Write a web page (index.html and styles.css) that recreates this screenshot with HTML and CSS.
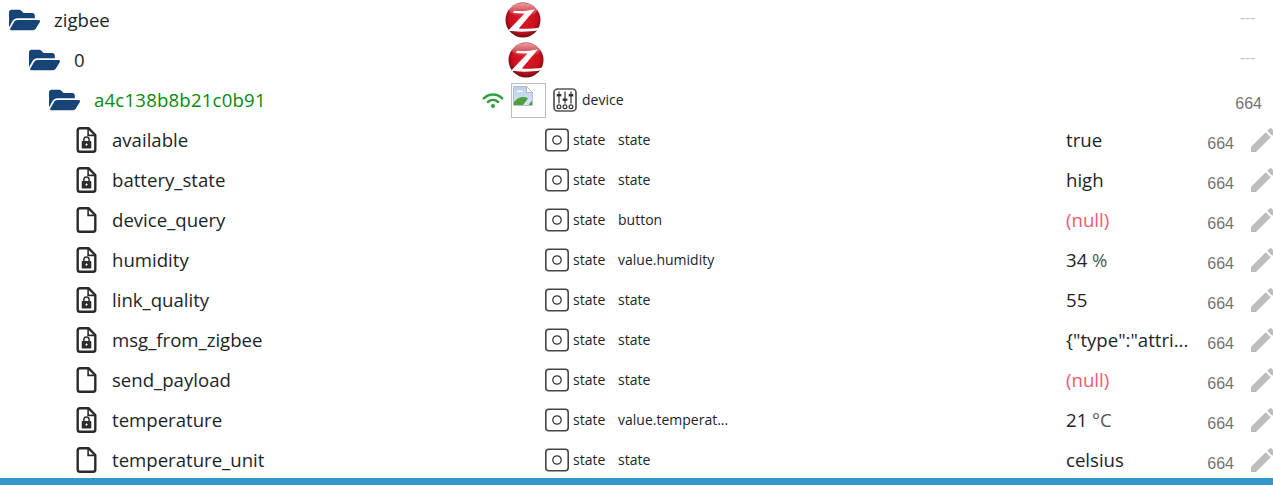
FILE: index.html
```html
<!DOCTYPE html>
<html lang="en">
<head>
<meta charset="utf-8">
<title>Objects</title>
<link rel="stylesheet" href="styles.css">
</head>
<body>
<svg class="defs" width="0" height="0" aria-hidden="true">
  <defs>
    <radialGradient id="zred" cx="50%" cy="45%" r="55%">
      <stop offset="0" stop-color="#e01a28"/>
      <stop offset="0.72" stop-color="#c8101c"/>
      <stop offset="1" stop-color="#6e0a10"/>
    </radialGradient>
    <linearGradient id="zshine" x1="0" y1="0" x2="0" y2="1">
      <stop offset="0" stop-color="#ffffff" stop-opacity="0.6"/>
      <stop offset="1" stop-color="#ffffff" stop-opacity="0"/>
    </linearGradient>
    <linearGradient id="sky" x1="0" y1="0" x2="0" y2="1">
      <stop offset="0" stop-color="#b7cfee"/>
      <stop offset="1" stop-color="#dbe6f5"/>
    </linearGradient>
    <symbol id="i-folder" viewBox="0 0 576 512">
      <path d="M572.694 292.093L500.27 416.248A63.997 63.997 0 0 1 444.989 448H45.025c-18.523 0-30.064-20.093-20.731-36.093l72.424-124.155A64 64 0 0 1 152 256h399.964c18.523 0 30.064 20.093 20.73 36.093zM152 224h328v-48c0-26.51-21.49-48-48-48H272l-64-64H48C21.49 64 0 85.49 0 112v278.046l69.077-118.418C86.214 242.25 117.989 224 152 224z"/>
    </symbol>
    <symbol id="i-file" viewBox="0 0 20 26">
      <path d="M3.5 1.2H12L18.8 8V22.5a2.3 2.3 0 0 1-2.3 2.3H3.5a2.3 2.3 0 0 1-2.3-2.3V3.5a2.3 2.3 0 0 1 2.3-2.3z" fill="none" stroke="currentColor" stroke-width="2.4" stroke-linejoin="round"/>
      <path d="M11.6 1.5V8.4H18.5" fill="none" stroke="currentColor" stroke-width="1.6"/>
    </symbol>
    <symbol id="i-file-lock" viewBox="0 0 20 26">
      <path d="M3.5 1.2H12L18.8 8V22.5a2.3 2.3 0 0 1-2.3 2.3H3.5a2.3 2.3 0 0 1-2.3-2.3V3.5a2.3 2.3 0 0 1 2.3-2.3z" fill="none" stroke="currentColor" stroke-width="2.4" stroke-linejoin="round"/>
      <path d="M11.6 1.5V8.4H18.5" fill="none" stroke="currentColor" stroke-width="1.6"/>
      <path d="M7.4 14.2v-1.6a2.6 2.6 0 0 1 5.2 0v1.6" fill="none" stroke="currentColor" stroke-width="1.5"/>
      <rect x="5.2" y="14" width="9.6" height="7.4" rx="1" fill="currentColor"/>
      <circle cx="10" cy="17.6" r="1.1" fill="#fff"/>
    </symbol>
    <symbol id="i-state" viewBox="0 0 24 24">
      <rect x="0.8" y="1.3" width="22.4" height="21.4" rx="3" fill="none" stroke="#444" stroke-width="1.6"/>
      <circle cx="12" cy="12" r="4.2" fill="none" stroke="#333" stroke-width="1.3"/>
    </symbol>
    <symbol id="i-device" viewBox="0 0 24 24">
      <rect x="1" y="1" width="22" height="22" rx="3.5" fill="none" stroke="#555" stroke-width="1.7"/>
      <g stroke="#333" stroke-width="1.2" fill="none">
        <path d="M6 3.5V15.5M12 3.5V15.5M18 3.5V15.5"/>
        <circle cx="6" cy="18.8" r="1.9"/>
        <circle cx="12" cy="18.8" r="1.9"/>
        <circle cx="18" cy="18.8" r="1.9"/>
      </g>
      <g fill="#333">
        <rect x="3.7" y="6" width="4.6" height="2.4"/>
        <rect x="9.7" y="10.5" width="4.6" height="2.4"/>
        <rect x="15.7" y="6" width="4.6" height="2.4"/>
      </g>
    </symbol>
    <symbol id="i-pencil" viewBox="0 0 24 24">
      <path d="M3 17.25V21h3.75L17.81 9.94l-3.75-3.75L3 17.25zM20.71 7.04c.39-.39.39-1.02 0-1.41l-2.34-2.34c-.39-.39-1.02-.39-1.41 0l-1.83 1.83 3.75 3.75 1.83-1.83z"/>
    </symbol>
    <symbol id="i-zigbee" viewBox="0 0 36 36">
      <circle cx="18" cy="18" r="17.5" fill="url(#zred)"/>
      <ellipse cx="18" cy="8" rx="14" ry="7" fill="url(#zshine)"/>
      <path d="M9 8.8C15 9.4 22 9 30 7.2L13.8 26.6C20 27 27 26.8 34.3 25.4L33 28.2C24 30 12 30 3 28.8L19.5 11.4C16 11.6 12 11.4 8 11z" fill="#fff"/>
    </symbol>
    <symbol id="i-wifi" viewBox="0 0 24 18">
      <g fill="none" stroke="#2f9e3f" stroke-width="2.7" stroke-linecap="round">
        <path d="M2 6.6C8 1.2 16 1.2 22 6.6"/>
        <path d="M6.4 10.6C9.8 7.6 14.2 7.6 17.6 10.6"/>
      </g>
      <circle cx="12" cy="15" r="2.2" fill="#2f9e3f"/>
    </symbol>
    <symbol id="i-broken" viewBox="0 0 20 20">
      <path d="M0.5 0.5H13.5L19.5 6.5V19.5H0.5z" fill="url(#sky)" stroke="#b4c0cc" stroke-width="1"/>
      <path d="M13.5 0.5V6.5H19.5z" fill="#fff" stroke="#b8b8b8" stroke-width="1"/>
      <path d="M1 19V16C5 10.5 11 10 15 12.5L10 19z" fill="#4da03c"/>
      <path d="M15.5 19L19 14.5V19z" fill="#4da03c"/>
      <path d="M4 6a2.5 1.5 0 0 1 6 0z" fill="#fff"/>
    </symbol>
  </defs>
</svg>

<main class="tree">
  <div class="row">
    <div class="name level-0"><svg class="folder"><use href="#i-folder"/></svg><span class="label">zigbee</span></div>
    <div class="mid mid-root"><svg class="logo"><use href="#i-zigbee"/></svg></div>
    <div class="value"></div>
    <div class="acl acl-none">---</div>
  </div>
  <div class="row">
    <div class="name level-1"><svg class="folder"><use href="#i-folder"/></svg><span class="label">0</span></div>
    <div class="mid mid-instance"><svg class="logo"><use href="#i-zigbee"/></svg></div>
    <div class="value"></div>
    <div class="acl acl-none">---</div>
  </div>
  <div class="row">
    <div class="name level-2"><svg class="folder"><use href="#i-folder"/></svg><span class="label label-online">a4c138b8b21c0b91</span></div>
    <div class="mid mid-device">
      <svg class="wifi"><use href="#i-wifi"/></svg>
      <span class="broken"><svg class="broken-icon"><use href="#i-broken"/></svg></span>
      <svg class="type-icon device-icon"><use href="#i-device"/></svg>
      <span class="type-text">device</span>
    </div>
    <div class="value"></div>
    <div class="acl acl-folder">664</div>
  </div>

  <div class="row">
    <div class="name level-3"><svg class="file"><use href="#i-file-lock"/></svg><span class="label">available</span></div>
    <div class="mid mid-state"><svg class="type-icon"><use href="#i-state"/></svg><span class="type-text type">state</span><span class="type-text">state</span></div>
    <div class="value">true</div>
    <div class="acl">664</div>
    <svg class="pencil"><use href="#i-pencil"/></svg>
  </div>
  <div class="row">
    <div class="name level-3"><svg class="file"><use href="#i-file-lock"/></svg><span class="label">battery_state</span></div>
    <div class="mid mid-state"><svg class="type-icon"><use href="#i-state"/></svg><span class="type-text type">state</span><span class="type-text">state</span></div>
    <div class="value">high</div>
    <div class="acl">664</div>
    <svg class="pencil"><use href="#i-pencil"/></svg>
  </div>
  <div class="row">
    <div class="name level-3"><svg class="file"><use href="#i-file"/></svg><span class="label">device_query</span></div>
    <div class="mid mid-state"><svg class="type-icon"><use href="#i-state"/></svg><span class="type-text type">state</span><span class="type-text">button</span></div>
    <div class="value value-null">(null)</div>
    <div class="acl">664</div>
    <svg class="pencil"><use href="#i-pencil"/></svg>
  </div>
  <div class="row">
    <div class="name level-3"><svg class="file"><use href="#i-file-lock"/></svg><span class="label">humidity</span></div>
    <div class="mid mid-state"><svg class="type-icon"><use href="#i-state"/></svg><span class="type-text type">state</span><span class="type-text">value.humidity</span></div>
    <div class="value">34 <span class="unit">%</span></div>
    <div class="acl">664</div>
    <svg class="pencil"><use href="#i-pencil"/></svg>
  </div>
  <div class="row">
    <div class="name level-3"><svg class="file"><use href="#i-file-lock"/></svg><span class="label">link_quality</span></div>
    <div class="mid mid-state"><svg class="type-icon"><use href="#i-state"/></svg><span class="type-text type">state</span><span class="type-text">state</span></div>
    <div class="value">55</div>
    <div class="acl">664</div>
    <svg class="pencil"><use href="#i-pencil"/></svg>
  </div>
  <div class="row">
    <div class="name level-3"><svg class="file"><use href="#i-file-lock"/></svg><span class="label">msg_from_zigbee</span></div>
    <div class="mid mid-state"><svg class="type-icon"><use href="#i-state"/></svg><span class="type-text type">state</span><span class="type-text">state</span></div>
    <div class="value">{"type":"attri...</div>
    <div class="acl">664</div>
    <svg class="pencil"><use href="#i-pencil"/></svg>
  </div>
  <div class="row">
    <div class="name level-3"><svg class="file"><use href="#i-file"/></svg><span class="label">send_payload</span></div>
    <div class="mid mid-state"><svg class="type-icon"><use href="#i-state"/></svg><span class="type-text type">state</span><span class="type-text">state</span></div>
    <div class="value value-null">(null)</div>
    <div class="acl">664</div>
    <svg class="pencil"><use href="#i-pencil"/></svg>
  </div>
  <div class="row">
    <div class="name level-3"><svg class="file"><use href="#i-file-lock"/></svg><span class="label">temperature</span></div>
    <div class="mid mid-state"><svg class="type-icon"><use href="#i-state"/></svg><span class="type-text type">state</span><span class="type-text">value.temperat...</span></div>
    <div class="value">21 <span class="unit">°C</span></div>
    <div class="acl">664</div>
    <svg class="pencil"><use href="#i-pencil"/></svg>
  </div>
  <div class="row">
    <div class="name level-3"><svg class="file"><use href="#i-file"/></svg><span class="label">temperature_unit</span></div>
    <div class="mid mid-state"><svg class="type-icon"><use href="#i-state"/></svg><span class="type-text type">state</span><span class="type-text">state</span></div>
    <div class="value">celsius</div>
    <div class="acl">664</div>
    <svg class="pencil"><use href="#i-pencil"/></svg>
  </div>
</main>
<div class="status-bar"></div>
</body>
</html>
```

FILE: styles.css
```css
html, body {
  margin: 0;
  padding: 0;
  height: 100%;
  overflow: hidden;
  background: #fff;
}

body {
  display: flex;
  flex-direction: column;
  font-family: "Open Sans", "Noto Sans", "Liberation Sans", sans-serif;
  color: #212529;
}

.defs {
  position: absolute;
}

.tree {
  flex: 1;
  min-height: 0;
  overflow: hidden;
}

.row {
  display: flex;
  align-items: center;
  height: 40px;
}

.name {
  display: flex;
  align-items: center;
  width: 480px;
  flex: none;
  box-sizing: border-box;
}

.level-0 { padding-left: 9px; }
.level-1 { padding-left: 29px; }
.level-2 { padding-left: 49px; }
.level-3 { padding-left: 76px; }

.folder {
  width: 31px;
  height: 28px;
  flex: none;
  fill: #164477;
}

.file {
  width: 21px;
  height: 26px;
  flex: none;
  color: #2b2b2b;
}

.label {
  font-size: 18.6px;
  margin-left: 14px;
  padding-bottom: 2px;
  white-space: nowrap;
}

.level-3 .label { margin-left: 15px; }

.label-online {
  color: #0a8a0a;
  letter-spacing: 0.2px;
}

.mid {
  display: flex;
  align-items: center;
  width: 586px;
  height: 100%;
  flex: none;
  box-sizing: border-box;
}

.mid-root { padding-left: 25px; }
.mid-instance { padding-left: 28px; }
.mid-device { padding-left: 2px; }
.mid-state { padding-left: 65px; }

.logo {
  width: 36px;
  height: 36px;
}

.wifi {
  width: 22px;
  height: 17px;
  flex: none;
}

.broken {
  display: block;
  width: 35px;
  height: 35px;
  margin-left: 7px;
  border: 1px solid #bdbdbd;
  box-sizing: border-box;
  flex: none;
}

.broken-icon {
  display: block;
  width: 20px;
  height: 20px;
  margin: 2px 0 0 1px;
}

.type-icon {
  width: 24px;
  height: 24px;
  flex: none;
}

.device-icon {
  margin-left: 7px;
}

.type-text {
  font-size: 14px;
  margin-left: 4px;
  padding-bottom: 2px;
  white-space: nowrap;
}

.mid-device .type-text { margin-left: 5px; }
.type { width: 41px; }

.value {
  width: 124px;
  flex: none;
  font-size: 18.6px;
  padding-bottom: 2px;
  white-space: nowrap;
  overflow: hidden;
}

.value-null { color: #ee5a70; }
.unit { color: #555; }

.acl {
  width: 44px;
  flex: none;
  font-family: "Liberation Sans", Arial, sans-serif;
  font-size: 16px;
  color: #757575;
  text-align: right;
  padding-top: 8px;
  white-space: nowrap;
}

.acl-folder {
  width: 72px;
}

.acl-none {
  width: 65px;
  padding-top: 0;
  padding-bottom: 6px;
  font-size: 15px;
  color: #bdbdbd;
}

.pencil {
  width: 32px;
  height: 32px;
  margin-left: 13px;
  flex: none;
  fill: #bdbdbd;
}

.status-bar {
  height: 7px;
  flex: none;
  background: #3399cc;
}
```
